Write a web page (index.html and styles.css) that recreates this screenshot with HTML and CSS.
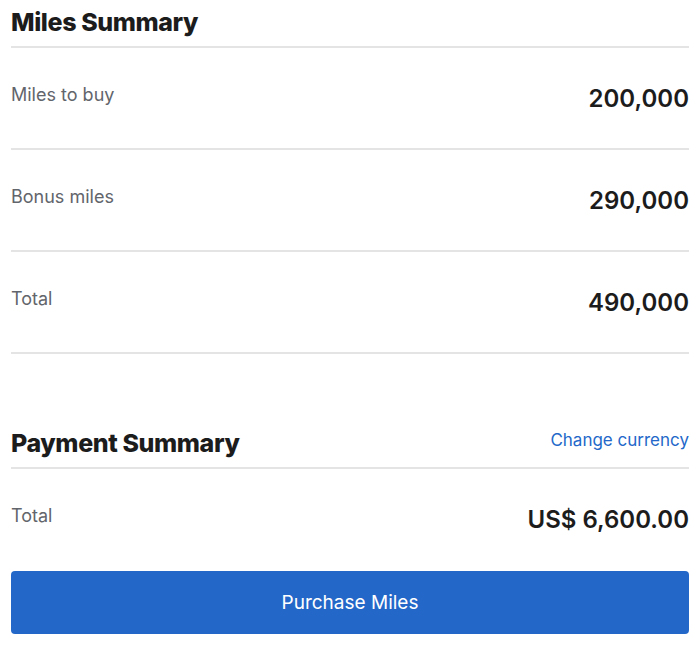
FILE: index.html
```html
<!DOCTYPE html>
<html lang="en">

<head>
  <meta charset="UTF-8">
  <meta name="viewport" content="width=device-width, initial-scale=1.0">
  <title>Buy Miles</title>
  <link rel="stylesheet" href="styles.css">
</head>

<body>
  <!-- Miles summary -->
  <section class="summary">
    <div class="summary-head">
      <h2>Miles Summary</h2>
    </div>
    <div class="summary-row">
      <span class="row-label">Miles to buy</span>
      <span class="row-value">200,000</span>
    </div>
    <div class="summary-row">
      <span class="row-label">Bonus miles</span>
      <span class="row-value">290,000</span>
    </div>
    <div class="summary-row">
      <span class="row-label">Total</span>
      <span class="row-value">490,000</span>
    </div>
  </section>

  <!-- Payment summary -->
  <section class="summary payment">
    <div class="summary-head">
      <h2>Payment Summary</h2>
      <a href="#currency" class="head-link">Change currency</a>
    </div>
    <div class="summary-row no-border">
      <span class="row-label">Total</span>
      <span class="row-value">US$ 6,600.00</span>
    </div>
    <button class="buy-btn" type="button">Purchase Miles</button>
  </section>
</body>

</html>
```

FILE: styles.css
```css
:root {
  --text-color: #1c1c1c;
  --muted-color: #62656b;
  --line-color: #e4e4e4;
  --brand-color: #2368c9;
}

* {
  box-sizing: border-box;
  margin: 0;
  padding: 0;
}

body {
  font-family: Inter, 'Liberation Sans', sans-serif;
  color: var(--text-color);
  background: #fff;
  padding: 0 11px;
}

/* section header */
.summary-head {
  display: flex;
  justify-content: space-between;
  align-items: flex-end;
  padding: 7px 0 9px;
  border-bottom: 2px solid var(--line-color);
}

.summary-head h2 {
  font-size: 25px;
  line-height: 30px;
  font-weight: 800;
  letter-spacing: -0.4px;
}

.head-link {
  color: var(--brand-color);
  text-decoration: none;
  font-size: 17px;
  line-height: 24px;
  margin-bottom: 6px;
}

/* rows */
.summary-row {
  display: flex;
  justify-content: space-between;
  align-items: flex-start;
  height: 102px;
  padding-top: 35px;
  border-bottom: 2px solid var(--line-color);
}

.summary-row.no-border {
  border-bottom: none;
}

.row-label {
  font-size: 18px;
  line-height: 24px;
  color: var(--muted-color);
}

.row-value {
  font-size: 24px;
  line-height: 30px;
  font-weight: 600;
  margin-top: 1px;
}

.payment {
  margin-top: 67px;
}

/* button */
.buy-btn {
  display: block;
  width: 100%;
  height: 63px;
  background: var(--brand-color);
  color: #fff;
  border: none;
  border-radius: 4px;
  font-family: inherit;
  font-size: 19px;
  cursor: pointer;
}
```
